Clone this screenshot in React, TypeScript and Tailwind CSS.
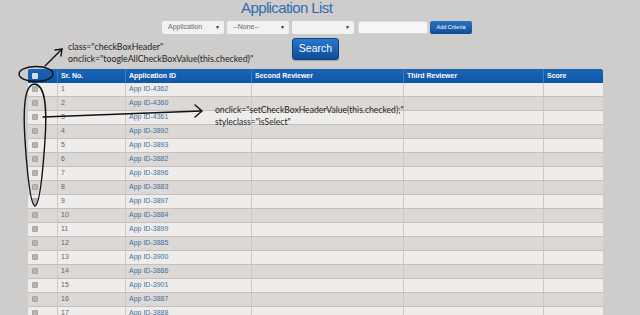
import React from 'react';

const ROWS: [number, string][] = [
  [1, '4362'], [2, '4360'], [3, '4361'], [4, '3892'], [5, '3893'], [6, '3882'],
  [7, '3896'], [8, '3883'], [9, '3897'], [10, '3884'], [11, '3899'], [12, '3885'],
  [13, '3900'], [14, '3886'], [15, '3901'], [16, '3887'], [17, '3888'],
];

const COLS = 'grid grid-cols-[29px_68px_126px_152px_140px_60px]';

const Select: React.FC<{ label?: string }> = ({ label }) => (
  <div className="w-[62px] h-[13px] bg-[#f3f2f2] rounded-[2px] flex items-center justify-between pl-[6px] pr-[4px] text-[7px] text-[#666]">
    <span>{label}</span>
    <span className="text-[5px] text-[#222]">▼</span>
  </div>
);

const App: React.FC = () => {
  return (
    <div className="relative w-[640px] h-[315px] overflow-hidden bg-[#cfcccc] font-['Liberation_Sans',Arial,sans-serif]">
      <h1 className="pl-[241px] text-[15px] leading-[15px] tracking-[-0.6px] text-[#2f6db3]">Application List</h1>

      <div className="flex items-center gap-[3px] pl-[162px] mt-[6px]">
        <Select label="Application" />
        <Select label="--None--" />
        <Select />
        <div className="w-[70px] h-[13px] ml-[1px] bg-[#f7f6f6] border border-[#d9d7d7] rounded-[2px]" />
        <button className="w-[42px] h-[13px] ml-[-1px] rounded-[2px] bg-gradient-to-b from-[#2a74c4] to-[#0f4e98] text-white text-[5.5px] leading-none">
          Add Criteria
        </button>
      </div>

      <div className="pl-[292px] mt-[1px]">
        <button className="w-[47px] h-[22px] rounded-[3px] border border-[#0b4586] bg-gradient-to-b from-[#2a78cc] to-[#0c4c98] text-white text-[10.5px] shadow-[0_1px_1px_rgba(0,0,0,0.25)]">
          Search
        </button>
      </div>

      <div className="ml-[28px] mt-[9px] w-[575px] text-[7px]">
        <div className={`${COLS} h-[14px] bg-gradient-to-b from-[#1b64b6] to-[#0d56a8] rounded-t-[2px] text-white font-bold`}>
          <div className="flex items-center pl-[4px]">
            <span className="w-[6px] h-[6px] bg-[#d8dbe0] rounded-[1px]" />
          </div>
          <div className="flex items-center pl-[3px] border-l border-[#3f7bc0]">Sr. No.</div>
          <div className="flex items-center pl-[3px] border-l border-[#3f7bc0]">Application ID</div>
          <div className="flex items-center pl-[3px] border-l border-[#3f7bc0]">Second Reviewer</div>
          <div className="flex items-center pl-[3px] border-l border-[#3f7bc0]">Third Reviewer</div>
          <div className="flex items-center pl-[3px] border-l border-[#3f7bc0]">Score</div>
        </div>
        {ROWS.map(([n, id]) => (
          <div
            key={n}
            className={`${COLS} h-[14px] border-b border-[#c3bfbd] ${n % 2 === 1 ? 'bg-[#efedec]' : 'bg-[#dcd8d6]'}`}
          >
            <div className="flex items-center pl-[4px]">
              <span className="w-[6px] h-[6px] bg-[#b9b5b5] border border-[#a7a3a3] rounded-[1px]" />
            </div>
            <div className="flex items-center pl-[3px] border-l border-[#cbc7c5] text-[#666]">{n}</div>
            <div className="flex items-center pl-[3px] border-l border-[#cbc7c5] text-[#3f6f9c]">App ID-{id}</div>
            <div className="border-l border-[#cbc7c5]" />
            <div className="border-l border-[#cbc7c5]" />
            <div className="border-l border-[#cbc7c5]" />
          </div>
        ))}
      </div>

      {/* annotations drawn over the screenshot */}
      <div className="absolute left-[68px] top-[41px] text-[8.8px] leading-[12px] text-[#1e1e1e] font-['Lato',sans-serif]">
        <div>class="checkBoxHeader"</div>
        <div>onclick="toogleAllCheckBoxValue(this.checked)"</div>
      </div>
      <div className="absolute left-[215px] top-[104px] text-[8.6px] leading-[12px] text-[#1e1e1e] font-['Lato',sans-serif]">
        <div>onclick="setCheckBoxHeaderValue(this.checked);"</div>
        <div>styleclass="isSelect"</div>
      </div>
      <svg className="absolute left-0 top-0 pointer-events-none" width="640" height="315">
        <g fill="none" stroke="#111" strokeWidth="1.4" strokeLinecap="round">
          <ellipse cx="36" cy="74" rx="17" ry="7.5" />
          <path d="M45 66 L62 49" />
          <path d="M55 50 L62 49 L61 56" />
          <path d="M35 84 C46 86 47 110 45 140 C43 170 40 205 35 206 C30 205 27 170 25 140 C23 110 24 84 35 84 Z" />
          <path d="M43 117 L201 111" />
          <path d="M195 105 L202 111 L195 117" />
        </g>
      </svg>
    </div>
  );
};

export default App;
